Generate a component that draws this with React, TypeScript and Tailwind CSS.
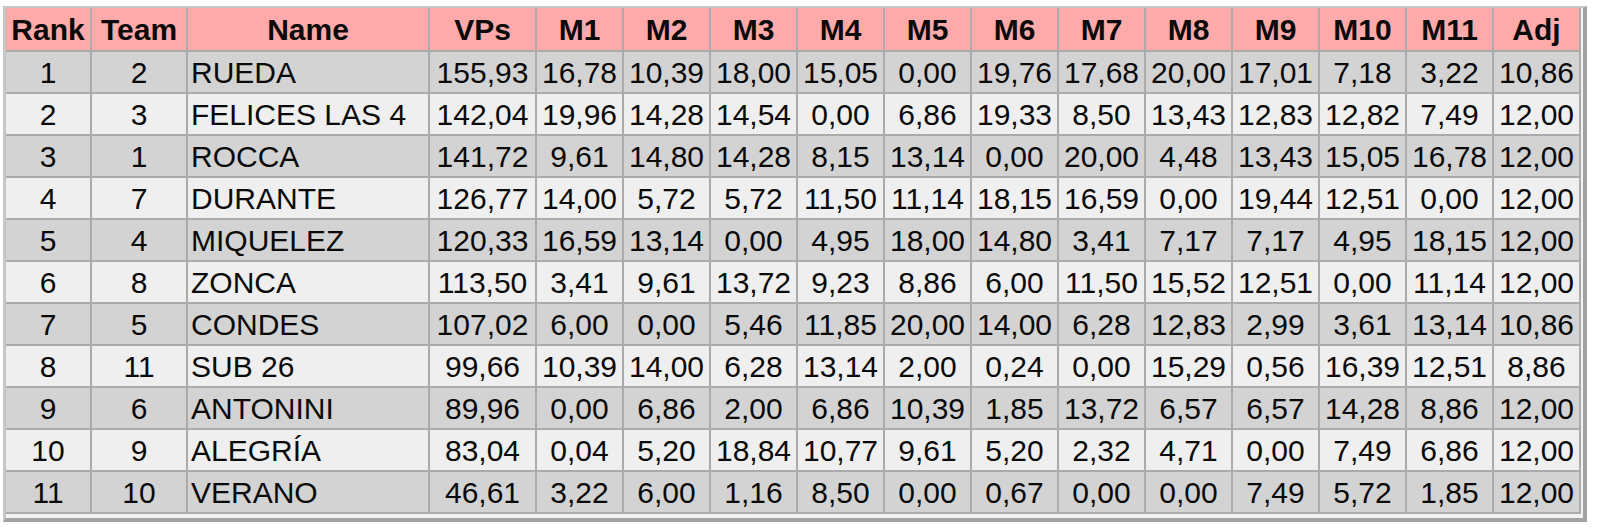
import React from "react";

type Row = {
  rank: number;
  team: number;
  name: string;
  vps: string;
  m: string[];
  adj: string;
};

const HEADERS = ["Rank", "Team", "Name", "VPs", "M1", "M2", "M3", "M4", "M5", "M6", "M7", "M8", "M9", "M10", "M11", "Adj"];

const ROWS: Row[] = [
  { rank: 1, team: 2, name: "RUEDA", vps: "155,93", m: ["16,78", "10,39", "18,00", "15,05", "0,00", "19,76", "17,68", "20,00", "17,01", "7,18", "3,22"], adj: "10,86" },
  { rank: 2, team: 3, name: "FELICES LAS 4", vps: "142,04", m: ["19,96", "14,28", "14,54", "0,00", "6,86", "19,33", "8,50", "13,43", "12,83", "12,82", "7,49"], adj: "12,00" },
  { rank: 3, team: 1, name: "ROCCA", vps: "141,72", m: ["9,61", "14,80", "14,28", "8,15", "13,14", "0,00", "20,00", "4,48", "13,43", "15,05", "16,78"], adj: "12,00" },
  { rank: 4, team: 7, name: "DURANTE", vps: "126,77", m: ["14,00", "5,72", "5,72", "11,50", "11,14", "18,15", "16,59", "0,00", "19,44", "12,51", "0,00"], adj: "12,00" },
  { rank: 5, team: 4, name: "MIQUELEZ", vps: "120,33", m: ["16,59", "13,14", "0,00", "4,95", "18,00", "14,80", "3,41", "7,17", "7,17", "4,95", "18,15"], adj: "12,00" },
  { rank: 6, team: 8, name: "ZONCA", vps: "113,50", m: ["3,41", "9,61", "13,72", "9,23", "8,86", "6,00", "11,50", "15,52", "12,51", "0,00", "11,14"], adj: "12,00" },
  { rank: 7, team: 5, name: "CONDES", vps: "107,02", m: ["6,00", "0,00", "5,46", "11,85", "20,00", "14,00", "6,28", "12,83", "2,99", "3,61", "13,14"], adj: "10,86" },
  { rank: 8, team: 11, name: "SUB 26", vps: "99,66", m: ["10,39", "14,00", "6,28", "13,14", "2,00", "0,24", "0,00", "15,29", "0,56", "16,39", "12,51"], adj: "8,86" },
  { rank: 9, team: 6, name: "ANTONINI", vps: "89,96", m: ["0,00", "6,86", "2,00", "6,86", "10,39", "1,85", "13,72", "6,57", "6,57", "14,28", "8,86"], adj: "12,00" },
  { rank: 10, team: 9, name: "ALEGRÍA", vps: "83,04", m: ["0,04", "5,20", "18,84", "10,77", "9,61", "5,20", "2,32", "4,71", "0,00", "7,49", "6,86"], adj: "12,00" },
  { rank: 11, team: 10, name: "VERANO", vps: "46,61", m: ["3,22", "6,00", "1,16", "8,50", "0,00", "0,67", "0,00", "0,00", "7,49", "5,72", "1,85"], adj: "12,00" },
];

export default function App() {
  return (
    <div className="w-[1600px] h-[527px] bg-white pt-[6px] pl-[3px] font-['Liberation_Sans',Arial,sans-serif] text-[#0a0a0a]">
      <div className="inline-block border-t-2 border-l-[3px] border-r-4 border-b-4 border-t-[#c6c6c6] border-l-[#c6c6c6] border-r-[#a2a2a2] border-b-[#a2a2a2] bg-[#f2f2f2] pr-[2px] pb-[4px]">
        <div className="grid grid-cols-[84px_94px_240px_105px_repeat(12,85px)] gap-[2px] bg-[#ababab] border-r-2 border-b-2 border-[#ababab]">
          {/* Header */}
          {HEADERS.map((h) => (
            <div key={h} className="h-[42px] bg-[#ffaaaa] flex items-center justify-center text-[30px] font-bold leading-none pt-[1px]">
              {h}
            </div>
          ))}

          {/* Rows */}
          {ROWS.map((r, i) => {
            const bg = i % 2 === 0 ? "bg-[#d3d3d3]" : "bg-[#efefef]";
            const cell = `h-[40px] ${bg} flex items-center justify-center text-[30px] leading-none pt-[1px]`;
            return (
              <React.Fragment key={r.rank}>
                <div className={cell}>{r.rank}</div>
                <div className={cell}>{r.team}</div>
                <div className={`h-[40px] ${bg} flex items-center pl-[3px] text-[30px] leading-none pt-[1px]`}>{r.name}</div>
                <div className={cell}>{r.vps}</div>
                {r.m.map((v, j) => (
                  <div key={j} className={cell}>
                    {v}
                  </div>
                ))}
                <div className={cell}>{r.adj}</div>
              </React.Fragment>
            );
          })}
        </div>
      </div>
    </div>
  );
}
